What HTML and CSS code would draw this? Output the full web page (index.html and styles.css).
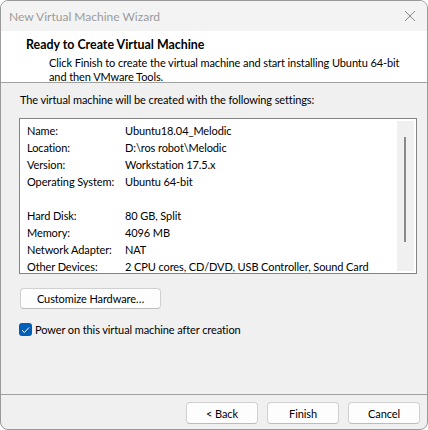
FILE: index.html
```html
<!DOCTYPE html>
<html lang="en">
<head>
  <meta charset="UTF-8" />
  <meta name="viewport" content="width=device-width, initial-scale=1.0" />
  <title>New Virtual Machine Wizard</title>
  <link rel="stylesheet" href="styles.css">
</head>
<body>
  <div class="window">
    <div class="titlebar">
      <span class="title">New Virtual Machine Wizard</span>
      <svg class="close" width="12" height="12" viewBox="0 0 12 12">
        <path d="M1 1 L11 11 M11 1 L1 11" stroke="#8a8a8a" stroke-width="1" fill="none" />
      </svg>
    </div>

    <div class="header">
      <h1>Ready to Create Virtual Machine</h1>
      <p>Click Finish to create the virtual machine and start installing Ubuntu 64-bit<br />and then VMware Tools.</p>
    </div>

    <div class="content">
      <p class="intro">The virtual machine will be created with the following settings:</p>

      <div class="listbox">
        <div class="rows">
          <div class="row"><span class="key">Name:</span><span>Ubuntu18.04_Melodic</span></div>
          <div class="row"><span class="key">Location:</span><span>D:\ros robot\Melodic</span></div>
          <div class="row"><span class="key">Version:</span><span>Workstation 17.5.x</span></div>
          <div class="row"><span class="key">Operating System:</span><span>Ubuntu 64-bit</span></div>
          <div class="row"></div>
          <div class="row"><span class="key">Hard Disk:</span><span>80 GB, Split</span></div>
          <div class="row"><span class="key">Memory:</span><span>4096 MB</span></div>
          <div class="row"><span class="key">Network Adapter:</span><span>NAT</span></div>
          <div class="row"><span class="key">Other Devices:</span><span>2 CPU cores, CD/DVD, USB Controller, Sound Card</span></div>
        </div>
        <div class="scrollbar"><div class="thumb"></div></div>
      </div>

      <button class="btn custom">Customize Hardware…</button>

      <label class="check">
        <span class="box">
          <svg width="9" height="8" viewBox="0 0 9 8">
            <path d="M1 4.2 L3.4 6.5 L8 1.5" stroke="#fff" stroke-width="1" fill="none" />
          </svg>
        </span>
        Power on this virtual machine after creation
      </label>
    </div>

    <div class="footer">
      <button class="btn">&lt; Back</button>
      <button class="btn">Finish</button>
      <button class="btn">Cancel</button>
    </div>
  </div>
</body>
</html>
```

FILE: styles.css
```css
* {
  box-sizing: border-box;
}
body {
  margin: 0;
  background-color: #fff;
  font-family: Lato, "Liberation Sans", sans-serif;
  font-size: 11px;
  letter-spacing: -0.1px;
  color: #000;
  white-space: nowrap;
}
.window {
  width: 428px;
  height: 430px;
  border: 1px solid #9a9a9a;
  border-radius: 8px;
  background-color: #f0f0f0;
  overflow: hidden;
  display: flex;
  flex-direction: column;
}
.titlebar {
  height: 30px;
  flex-shrink: 0;
  display: flex;
  align-items: center;
  justify-content: space-between;
  padding: 0 11px 0 8px;
  background-color: #f3f3f3;
}
.title {
  color: #9b9b9b;
  font-size: 12px;
  letter-spacing: 0;
}
.header {
  height: 52px;
  flex-shrink: 0;
  background-color: #fff;
  border-bottom: 1px solid #a0a0a0;
  padding: 6px 0 0 25px;
}
h1 {
  margin: 0;
  font-size: 12.4px;
  font-weight: bold;
  letter-spacing: 0;
  line-height: 16px;
}
.header p {
  margin: 3px 0 0 23px;
  line-height: 13.5px;
}
.content {
  flex: 1;
  padding: 9px 10px 0 18px;
}
.intro {
  margin: 0 0 10px 1px;
  line-height: 16px;
}
.listbox {
  height: 156px;
  border: 1px solid #848484;
  background-color: #fff;
  display: flex;
  padding: 2px;
}
.rows {
  flex: 1;
  padding: 1px 0 0 5px;
}
.row {
  display: flex;
  height: 17px;
  align-items: center;
}
.key {
  width: 98px;
}
.scrollbar {
  width: 17px;
  background-color: #f0f0f0;
  padding: 16px 0 0 7px;
}
.thumb {
  width: 2px;
  height: 105px;
  background-color: #8a8a8a;
}
.btn {
  font-family: inherit;
  font-size: 11px;
  letter-spacing: -0.1px;
  color: #000;
  background-color: #fdfdfd;
  border: 1px solid #d0d0d0;
  border-bottom-color: #bcbcbc;
  border-radius: 4px;
  height: 22px;
  width: 72px;
  padding: 0;
}
.custom {
  width: 141px;
  height: 21px;
  margin: 14px 0 0 1px;
}
.check {
  display: flex;
  align-items: center;
  margin-top: 14px;
  gap: 3px;
}
.box {
  width: 13px;
  height: 13px;
  border-radius: 3px;
  background-color: #005fb8;
  display: flex;
  align-items: center;
  justify-content: center;
}
.footer {
  height: 35px;
  flex-shrink: 0;
  border-top: 1px solid #a0a0a0;
  display: flex;
  justify-content: flex-end;
  gap: 9px;
  padding: 7px 7px 0 0;
}
```
